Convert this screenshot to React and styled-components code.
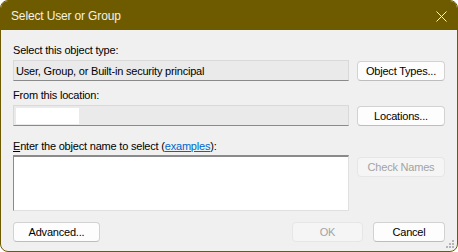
import React from 'react';
import styled, { createGlobalStyle } from 'styled-components';

const GlobalStyle = createGlobalStyle`
  html, body {
    margin: 0;
    padding: 0;
    background: #ffffff;
  }
  * {
    box-sizing: border-box;
  }
`;

const olive = '#6e5b00';

const Window = styled.div`
  width: 458px;
  height: 252px;
  border: 1px solid ${olive};
  border-radius: 8px;
  overflow: hidden;
  background: #f0f0f0;
  display: flex;
  flex-direction: column;
  position: relative;
  font-family: "Liberation Sans", Arial, sans-serif;
  font-size: 11px;
  letter-spacing: -0.2px;
  color: #000;
`;

const TitleBar = styled.div`
  height: 29px;
  background: ${olive};
  display: flex;
  align-items: center;
  justify-content: space-between;
  padding: 0 10px 0 10px;
  flex-shrink: 0;
`;

const Title = styled.span`
  color: #f4f1e6;
  font-size: 12px;
  letter-spacing: -0.15px;
  font-family: "Liberation Sans", Arial, sans-serif;
`;

const CloseIcon = styled.svg`
  width: 11px;
  height: 11px;
  margin-top: 1px;
`;

const Body = styled.div`
  flex: 1;
  padding: 13px 12px 0 12px;
  display: flex;
  flex-direction: column;
`;

const Label = styled.div`
  height: 14px;
  line-height: 14px;
  margin-top: ${p => p.$gap || 0}px;
  white-space: nowrap;
`;

const Row = styled.div`
  display: grid;
  grid-template-columns: 336px 88px;
  column-gap: 8px;
  align-items: ${p => p.$align || 'center'};
  margin-top: ${p => p.$gap || 0}px;
`;

const ReadField = styled.div`
  height: 21px;
  background: #eaeaea;
  border: 1px solid #d9d9d9;
  border-bottom-color: #8a8a8a;
  padding: 0 3px 0 2px;
  display: flex;
  align-items: center;
  line-height: 14px;
`;

const Blank = styled.span`
  display: block;
  width: 63px;
  height: 16px;
  background: #ffffff;
`;

const TextArea = styled.div`
  height: 56px;
  background: #ffffff;
  border: 1px solid #e0e0e0;
  border-top: 2px solid #8a8a8a;
  border-left: 1px solid #8a8a8a;
`;

const Button = styled.div`
  width: ${p => p.$width || 88}px;
  height: 20px;
  border-radius: 4px;
  border: 1px solid ${p => (p.$disabled ? '#e6e6e6' : '#d2d2d2')};
  border-bottom-color: ${p => (p.$disabled ? '#e6e6e6' : '#bdbdbd')};
  background: ${p => (p.$disabled ? '#f5f5f5' : '#fdfdfd')};
  color: ${p => (p.$disabled ? '#a3a3a3' : '#000')};
  display: flex;
  align-items: center;
  justify-content: center;
  margin-top: ${p => p.$top || 0}px;
  white-space: nowrap;
`;

const Link = styled.span`
  color: #0066cc;
  text-decoration: underline;
`;

const Accel = styled.span`
  text-decoration: underline;
`;

const Footer = styled.div`
  display: flex;
  align-items: center;
  margin-top: 11px;
  gap: 10px;
`;

const Spacer = styled.div`
  flex: 1;
`;

const Grip = styled.svg`
  position: absolute;
  right: 2px;
  bottom: 2px;
  width: 10px;
  height: 10px;
`;

export default function App() {
  return (
    <>
      <GlobalStyle />
      <Window>
        <TitleBar>
          <Title>Select User or Group</Title>
          <CloseIcon viewBox="0 0 11 11">
            <path d="M0.5 0.5 L10.5 10.5 M10.5 0.5 L0.5 10.5" stroke="#f4f1e6" strokeWidth="1" fill="none" />
          </CloseIcon>
        </TitleBar>
        <Body>
          <Label>Select this object type:</Label>
          <Row $gap={3}>
            <ReadField>User, Group, or Built-in security principal</ReadField>
            <Button>Object Types...</Button>
          </Row>
          <Label $gap={7}>From this location:</Label>
          <Row $gap={3}>
            <ReadField>
              <Blank />
            </ReadField>
            <Button>Locations...</Button>
          </Row>
          <Label $gap={13}>
            <Accel>E</Accel>nter the object name to select (<Link>examples</Link>):
          </Label>
          <Row $gap={2} $align="start">
            <TextArea />
            <Button $disabled $top={2}>Check Names</Button>
          </Row>
          <Footer>
            <Button $width={87}>Advanced...</Button>
            <Spacer />
            <Button $width={71} $disabled>OK</Button>
            <Button $width={72}>Cancel</Button>
          </Footer>
        </Body>
        <Grip viewBox="0 0 10 10">
          {[[7, 1], [4, 4], [7, 4], [1, 7], [4, 7], [7, 7]].map(([x, y]) => (
            <rect key={`${x}-${y}`} x={x} y={y} width="2" height="2" fill="#b5b5b5" />
          ))}
        </Grip>
      </Window>
    </>
  );
}
